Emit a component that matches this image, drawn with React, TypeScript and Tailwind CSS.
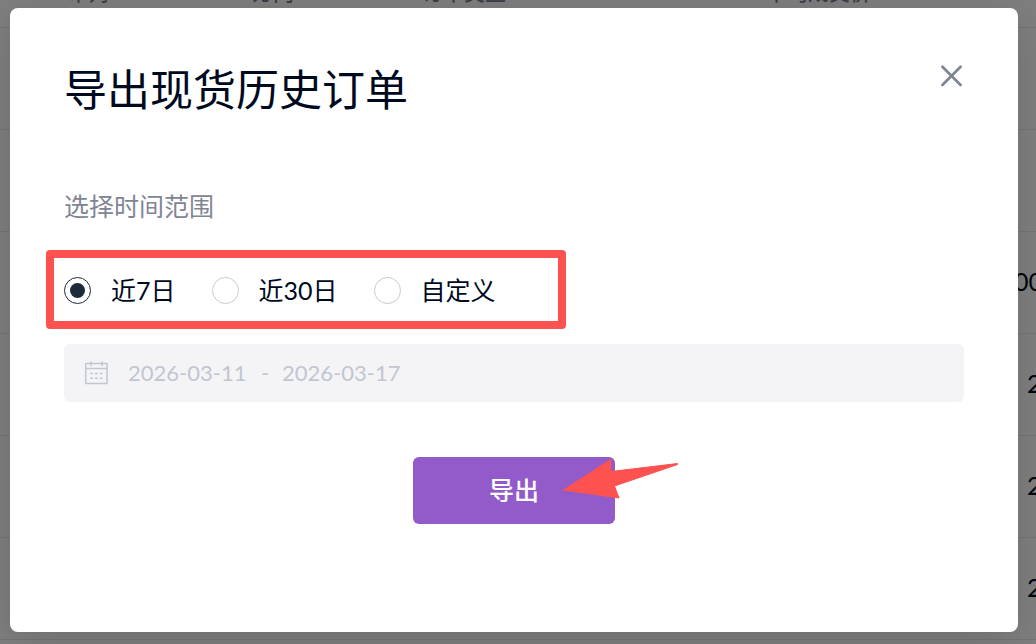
// Export dialog for spot order history, shown above the dimmed order table.

import { useState } from 'react'

interface OrderRow {
  id: number
  price: string
}

const ORDERS: OrderRow[] = [
  { id: 1, price: '' },
  { id: 2, price: '' },
  { id: 3, price: '00' },
  { id: 4, price: '2' },
  { id: 5, price: '2' },
  { id: 6, price: '2' },
]

const RANGES = [
  { value: '7d', label: '近7日' },
  { value: '30d', label: '近30日' },
  { value: 'custom', label: '自定义' },
]

// ── Order table behind the dialog ────────────────────────────────────────────
function OrderTable() {
  return (
    <div className="absolute inset-0 overflow-hidden bg-white" aria-hidden="true">
      <table className="-mt-10 w-full table-fixed border-collapse text-left">
        <thead>
          <tr className="h-[67px] border-b border-[#ebebee] align-top text-[21px] leading-6 text-[#76808f]">
            <th className="w-[252px] pt-5 pl-[68px] font-medium">币对</th>
            <th className="w-[170px] pt-5 font-medium">方向</th>
            <th className="w-[344px] pt-5 font-medium">订单类型</th>
            <th className="w-[248px] pt-5 font-medium">平均成交价</th>
            <th />
          </tr>
        </thead>
        <tbody>
          {ORDERS.map(order => (
            <tr key={order.id} className="h-[102px] border-b border-[#ebebee] text-[25px] text-[#000a1e]">
              <td />
              <td />
              <td />
              <td />
              <td className={order.price === '00' ? 'whitespace-nowrap' : 'pl-[13px] whitespace-nowrap'}>
                {order.price}
              </td>
            </tr>
          ))}
        </tbody>
      </table>
    </div>
  )
}

function CloseIcon() {
  return (
    <svg viewBox="0 0 26 28" className="h-7 w-[26px]" fill="none" stroke="#808594" strokeWidth="2.7" strokeLinecap="round">
      <path d="M4.4 4.8 22.6 23M22.6 4.8 4.4 23" />
    </svg>
  )
}

function CalendarIcon() {
  return (
    <svg viewBox="0 0 24 24" className="size-6 shrink-0" fill="none" stroke="#c1c6cf" strokeWidth="1.5">
      <rect x="1.7" y="2.6" width="21.4" height="20" rx="0.6" />
      <path d="M1.7 7.6h21.4M7 .6v4.4M18 .6v4.4" />
      <path d="M6.2 12.6h2.8M11 12.6h2.8M15.8 12.6h2.8M6.2 17.2h2.8M11 17.2h2.8M15.8 17.2h2.8" />
    </svg>
  )
}

export default function App() {
  const [range, setRange] = useState('7d')
  const [start, setStart] = useState('2026-03-11')
  const [end, setEnd] = useState('2026-03-17')

  const locked = range !== 'custom'
  const dateCls = 'w-[120px] bg-transparent text-[22px] leading-7 text-[#c1c6cf] focus:outline-none'

  return (
    <div className="relative min-h-screen overflow-hidden font-[Lato,'Noto_Sans_CJK_SC',sans-serif]">
      <OrderTable />

      <div className="relative min-h-screen bg-black/50 pt-2 pr-[18px] pb-3 pl-[10px]">
        <div
          role="dialog"
          aria-labelledby="export-title"
          className="rounded-lg bg-white px-[54px] pt-[54px] pb-[108px] shadow-[0_8px_40px_rgba(0,0,0,0.15)]"
        >
          {/* Header */}
          <div className="flex items-start justify-between">
            <h2 id="export-title" className="text-[43px] leading-[56px] text-[#000a1e]">导出现货历史订单</h2>
            <button type="button" aria-label="关闭">
              <CloseIcon />
            </button>
          </div>

          <form onSubmit={e => e.preventDefault()}>
            {/* Time range */}
            <p id="range-label" className="mt-[72px] text-[25px] leading-8 text-[#808594]">选择时间范围</p>
            <div role="radiogroup" aria-labelledby="range-label" className="relative mt-[52px] flex gap-9">
              {RANGES.map(item => (
                <label key={item.value} className="flex items-center gap-5 text-[25px] leading-8 text-[#000a1e]">
                  <input
                    type="radio"
                    name="range"
                    value={item.value}
                    checked={range === item.value}
                    onChange={() => setRange(item.value)}
                    className="grid size-[27px] appearance-none place-content-center rounded-full border border-[#c8c9d1] checked:border-[#1e2a3a] checked:before:size-[15px] checked:before:rounded-full checked:before:bg-[#1e2a3a]"
                  />
                  {item.label}
                </label>
              ))}
              {/* Red frame around the options */}
              <div className="pointer-events-none absolute -top-6 -left-[18px] h-[79px] w-[520px] rounded border-8 border-[#fd5250]" />
            </div>

            {/* Dates */}
            <div className="mt-[38px] flex h-[58px] items-center rounded-md bg-[#f4f4f7] pl-5">
              <CalendarIcon />
              <input
                type="text"
                aria-label="开始日期"
                value={start}
                disabled={locked}
                onChange={e => setStart(e.target.value)}
                className={`ml-5 ${dateCls}`}
              />
              <span className="w-[34px] text-center text-[22px] leading-7 text-[#c1c6cf]">-</span>
              <input
                type="text"
                aria-label="结束日期"
                value={end}
                disabled={locked}
                onChange={e => setEnd(e.target.value)}
                className={dateCls}
              />
            </div>

            {/* Submit */}
            <div className="relative mx-auto mt-[55px] w-[202px]">
              <button type="submit" className="h-[67px] w-full rounded-md bg-[#925bc9] pb-0.5 text-[25px] leading-8 font-medium text-white">
                导出
              </button>
              <svg
                viewBox="0 0 120 44"
                className="pointer-events-none absolute top-0 left-[148px] h-11 w-[120px]"
                fill="#fd5250"
                stroke="#fd5250"
                strokeLinejoin="round"
              >
                <path d="M2.5 33 49.5 2.5 50 14.5 116.5 6.5 116.5 7.5 53.5 29 58 41Z" />
              </svg>
            </div>
          </form>
        </div>
      </div>
    </div>
  )
}
